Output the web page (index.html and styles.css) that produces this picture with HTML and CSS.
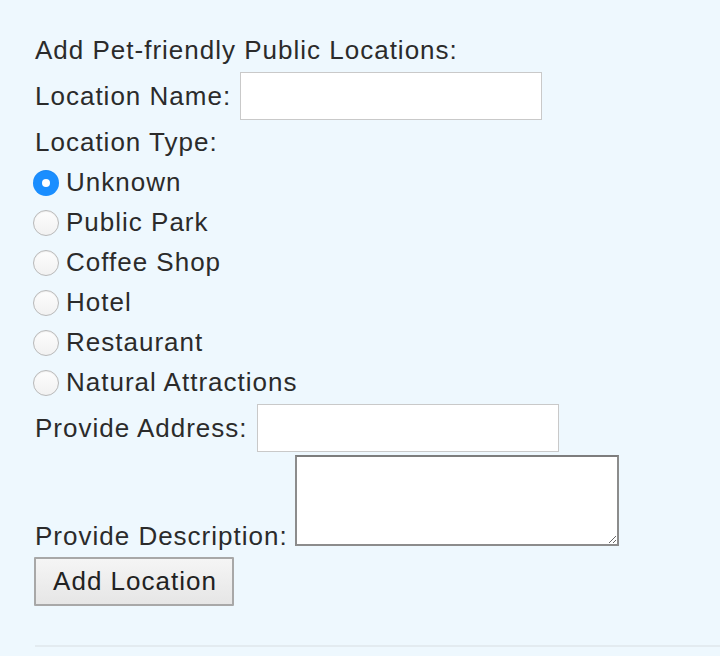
FILE: index.html
```html
<!DOCTYPE html>
<html>
<head>
<meta charset="utf-8">
<link rel="stylesheet" href="styles.css">
</head>
<body>
<form class="form">
  <div class="title">Add Pet-friendly Public Locations:</div>
  <div class="row">
    <label class="label" for="name">Location Name:</label>
    <input class="text-input" id="name" type="text">
  </div>
  <div class="title">Location Type:</div>
  <div class="radios">
    <label class="radio-row"><input class="radio" type="radio" name="type" checked><span>Unknown</span></label>
    <label class="radio-row"><input class="radio" type="radio" name="type"><span>Public Park</span></label>
    <label class="radio-row"><input class="radio" type="radio" name="type"><span>Coffee Shop</span></label>
    <label class="radio-row"><input class="radio" type="radio" name="type"><span>Hotel</span></label>
    <label class="radio-row"><input class="radio" type="radio" name="type"><span>Restaurant</span></label>
    <label class="radio-row"><input class="radio" type="radio" name="type"><span>Natural Attractions</span></label>
  </div>
  <div class="row">
    <label class="label" for="addr">Provide Address:</label>
    <input class="text-input" id="addr" type="text">
  </div>
  <div class="row row-bottom">
    <label class="label label-bottom" for="desc">Provide Description:</label>
    <textarea class="desc" id="desc"></textarea>
  </div>
  <button class="btn" type="button">Add Location</button>
  <hr class="rule">
</form>
</body>
</html>
```
FILE: styles.css
```css
html, body {
  margin: 0;
  padding: 0;
  background: #eef8fe;
}
body {
  font-family: "Liberation Sans", Arial, sans-serif;
  font-size: 26px;
  letter-spacing: 1px;
  color: #2b2b2b;
  height: 656px;
  overflow: hidden;
}
.form {
  padding: 30px 0 0 34px;
}
.title {
  line-height: 40px;
  height: 40px;
  padding-left: 1px;
}
.row {
  display: flex;
  align-items: center;
  height: 52px;
}
.label {
  padding-left: 1px;
  line-height: 40px;
}
.text-input {
  box-sizing: border-box;
  width: 302px;
  height: 48px;
  margin: 0 0 0 9px;
  border: 1px solid #c9c9c9;
  background: #fff;
  font: inherit;
  padding: 0 8px;
  outline: none;
}
.radios {
  display: flex;
  flex-direction: column;
}
.radio-row {
  display: flex;
  align-items: center;
  height: 40px;
}
.radio {
  -webkit-appearance: none;
  appearance: none;
  box-sizing: border-box;
  width: 26px;
  height: 26px;
  margin: 1px 7px 0 -1px;
  border-radius: 50%;
  border: 1px solid #b9b9b9;
  background: linear-gradient(#fdfdfd, #f1f1f1);
  box-shadow: inset 0 1px 1px rgba(0,0,0,0.06);
  position: relative;
  flex: none;
}
.radio:checked {
  border: none;
  background: #1a8eff;
}
.radio:checked::after {
  content: "";
  position: absolute;
  left: 9px;
  top: 9px;
  width: 8px;
  height: 8px;
  border-radius: 50%;
  background: #fff;
}
.row-bottom {
  align-items: flex-end;
  height: auto;
  margin-top: 1px;
}
.label-bottom {
  line-height: 24px;
  margin-bottom: -2px;
}
.desc {
  box-sizing: border-box;
  width: 324px;
  height: 91px;
  margin: 0 0 0 7px;
  border: 2px solid #8c8c8c;
  border-top-color: #7d7d7d;
  background: #fff;
  font: inherit;
  resize: both;
  outline: none;
}
.btn {
  display: block;
  box-sizing: border-box;
  width: 200px;
  height: 49px;
  margin: 11px 0 0 0;
  border: 2px solid #a8a8a8;
  border-radius: 1px;
  background: linear-gradient(#f5f5f5, #e6e6e6);
  font: inherit;
  letter-spacing: inherit;
  color: #222;
  padding: 0 0 0 2px;
  text-align: center;
}
.rule {
  border: none;
  border-top: 2px solid #e3ebf0;
  margin: 39px 0 0 1px;
}
```
